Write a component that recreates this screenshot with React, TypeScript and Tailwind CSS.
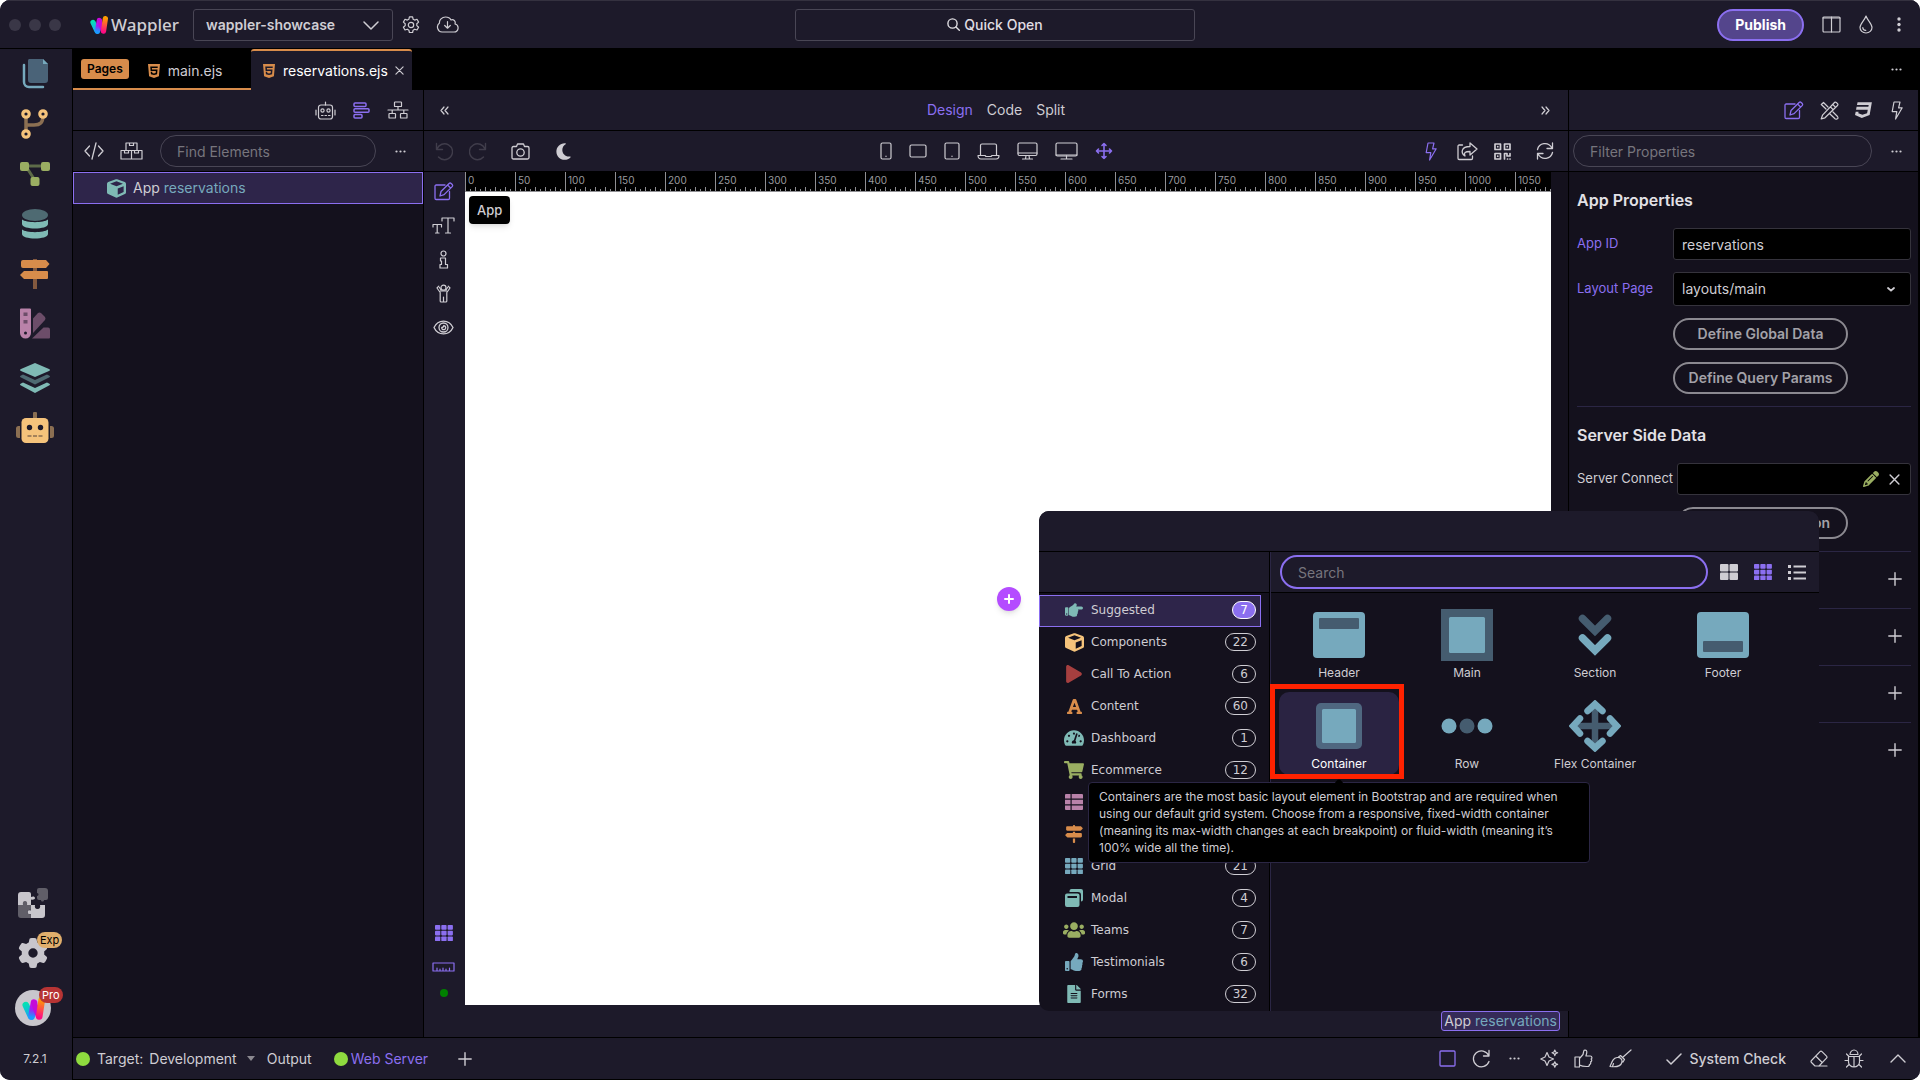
import React from 'react';
import { FaFileAlt, FaFont, FaHandPointRight, FaHtml5, FaPlay, FaShoppingCart, FaTachometerAlt, FaThumbsUp, FaUsers } from 'react-icons/fa';
import { FaCss3, FaMoon, FaSignsPost, FaGear, FaPencil } from 'react-icons/fa6';

type SvgProps = { w: number; h: number; vb?: string; sw?: number; className?: string; children: React.ReactNode };

function Line({ w, h, vb, sw = 1.3, className = '', children }: SvgProps) {
  return (
    <svg width={w} height={h} viewBox={vb ?? `0 0 ${w} ${h}`} fill="none" stroke="currentColor" strokeWidth={sw}
      strokeLinecap="round" strokeLinejoin="round" className={`block shrink-0 ${className}`} aria-hidden="true">
      {children}
    </svg>
  );
}

function Solid({ w, h, vb, className = '', children }: SvgProps) {
  return (
    <svg width={w} height={h} viewBox={vb ?? `0 0 ${w} ${h}`} fill="currentColor" className={`block shrink-0 ${className}`} aria-hidden="true">
      {children}
    </svg>
  );
}

function IconButton({ label, className = '', children }: { label: string; className?: string; children: React.ReactNode }) {
  return (
    <button type="button" aria-label={label} className={`flex shrink-0 items-center justify-center ${className}`}>
      {children}
    </button>
  );
}

function LogoMark({ size, id }: { size: number; id: string }) {
  return (
    <svg width={size} height={size} viewBox="0 0 24 24" fill="none" strokeLinecap="round" className="block shrink-0" aria-hidden="true">
      <defs>
        <linearGradient id={`${id}-a`} gradientUnits="userSpaceOnUse" x1="4" y1="7" x2="10" y2="22">
          <stop offset="0" stopColor="#06e0b4" /><stop offset="1" stopColor="#1a9bff" />
        </linearGradient>
        <linearGradient id={`${id}-b`} gradientUnits="userSpaceOnUse" x1="13" y1="5" x2="10" y2="21">
          <stop offset="0" stopColor="#d808e8" /><stop offset="0.5" stopColor="#a51cf2" /><stop offset="1" stopColor="#1a9bff" />
        </linearGradient>
        <linearGradient id={`${id}-c`} gradientUnits="userSpaceOnUse" x1="21" y1="3" x2="17" y2="21">
          <stop offset="0" stopColor="#ff9d00" /><stop offset="1" stopColor="#ff0a84" />
        </linearGradient>
      </defs>
      <path d="M4 8.5 9.3 20" stroke={`url(#${id}-a)`} strokeWidth="7" />
      <path d="M12.5 6 10 20.4" stroke={`url(#${id}-b)`} strokeWidth="7" />
      <path d="M12.5 6 17 19" stroke="#c40bd8" strokeWidth="6" />
      <path d="M20.5 3.6 18 20.2" stroke={`url(#${id}-c)`} strokeWidth="7" />
    </svg>
  );
}

const Dots = () => (
  <Solid w={11} h={3}><circle cx="1.5" cy="1.5" r="1.1" /><circle cx="5.5" cy="1.5" r="1.1" /><circle cx="9.5" cy="1.5" r="1.1" /></Solid>
);
const Plus = () => <Line w={14} h={14} sw={1.4}><path d="M7 .8v12.4M.8 7h12.4" /></Line>;
const Cross = ({ s = 10 }: { s?: number }) => <Line w={s} h={s} vb="0 0 10 10"><path d="m1 1 8 8M9 1 1 9" /></Line>;
const Bolt = () => <Line w={12} h={19} sw={1.2}><path d="M3 1h6L7.6 6.8h3.6L4.6 18l1.2-7.4H1.2z" /></Line>;
const Edit = () => (
  <Line w={20} h={19} sw={1.3}>
    <path d="M11 3H2.2C1.500 3 1 3.500 1 4.200v12.100c0 .7.5 1.200 1.200 1.200h12.100c.7 0 1.200-.5 1.200-1.200V9.500" />
    <path d="m7 9.500 8.100-8c.6-.6 1.500-.6 2.100 0l1 1c.6.6.6 1.500 0 2.100l-8.100 8L6 14zM13.600 3l3.100 3.100" />
  </Line>
);
const Grid9 = () => (
  <Solid w={18} h={16}>
    {[0, 6.3, 12.6].map((x) => [0, 5.7, 11.4].map((y) => <rect key={`${x}-${y}`} x={x} y={y} width="5.300" height="4.700" rx="0.8" />))}
  </Solid>
);
const Cube = ({ className = '' }: { className?: string }) => (
  <svg width="19" height="19" viewBox="0 0 20 20" fill="currentColor" className={`block shrink-0 ${className}`} aria-hidden="true">
    <path fillRule="evenodd" d="M9.300.3a2 2 0 0 1 1.400 0l8 2.900A2 2 0 0 1 20 5.100v9a2 2 0 0 1-1.200 1.800l-8 3.600a2 2 0 0 1-1.600 0l-8-3.600A2 2 0 0 1 0 14.100v-9a2 2 0 0 1 1.300-1.900zM10 2.400 3.200 5 10 7.600 16.800 5zM11.300 10v6.500l6.200-2.800V7.600z" />
  </svg>
);

/* ---------- left rail ---------- */

const railTop: { label: string; icon: React.ReactNode; className?: string }[] = [
  { label: 'Pages', icon: (
    <Solid w={30} h={32}><path d="M4 7v17a5 5 0 0 0 5 5h14" fill="none" stroke="#76a9bd" strokeWidth="2.500" strokeLinecap="round" />
      <path d="M9 1h14l5 5v16a3 3 0 0 1-3 3H11a3 3 0 0 1-3-3V3a2 2 0 0 1 1-2" fill="#4a6378" /><path d="M23 1v5h5z" fill="#76a9bd" /></Solid>) },
  { label: 'Source control', icon: (
    <Solid w={30} h={32}><path d="M6 6v20M6 17h8c6 0 9-2 9-10" fill="none" stroke="#8b6f52" strokeWidth="3.500" />
      <g fill="#1d1a2a" stroke="#f5c37b" strokeWidth="3.200"><circle cx="6" cy="6" r="3.200" /><circle cx="23" cy="6" r="3.200" /><circle cx="6" cy="26" r="3.200" /></g></Solid>) },
  { label: 'Workflows', icon: (
    <Solid w={32} h={26}><path d="M6 5h20M8 7l9 14" fill="none" stroke="#5d6b48" strokeWidth="3" />
      <g fill="#9aae62"><rect x="1" y="1" width="9" height="9" rx="2" /><rect x="22" y="1" width="9" height="9" rx="2" /><rect x="11.500" y="16" width="9" height="9" rx="2" /></g></Solid>) },
  { label: 'Database', icon: (
    <Solid w={28} h={32}><ellipse cx="14" cy="7" rx="13" ry="6" fill="#4e6a72" />
      <path d="M1 11.500C5 15 23 15 27 11.500V16c0 6-26 6-26 0z" fill="#7fbab5" />
      <path d="M1 21.500C5 25 23 25 27 21.500V26c0 6-26 6-26 0z" fill="#7fbab5" /></Solid>) },
  { label: 'Routes', icon: (
    <Solid w={32} h={32}><path d="M14 1h4v30h-4z" fill="#83593f" /><path d="M4 2h23l3.500 4L27 10H4a2 2 0 0 1-2-2V4a2 2 0 0 1 2-2M28 13H5l-4 4 4 4h23a1 1 0 0 0 1-1v-6a1 1 0 0 0-1-1" fill="#d88c4b" /></Solid>) },
  { label: 'Styles', icon: (
    <Solid w={32} h={32}><path d="M14 10.500 19 5q1.500-1 3 0l4 4q1 1.500 0 3L14 25z" fill="#6c4d69" /><path d="m13 30.500 11.500-11H29a2 2 0 0 1 2 2v8a1 1 0 0 1-1 1z" fill="#6c4d69" />
      <path d="M2 .5h9a1 1 0 0 1 1 1V25a5.500 5.500 0 0 1-11 0V1.500a1 1 0 0 1 1-1" fill="#b982a9" /><path d="M4.500 4.500h4v3.500h-4zM4.500 12h4v3.500h-4z" fill="#6c4d69" /><circle cx="6.500" cy="25" r="1.500" fill="#1d1a2a" /></Solid>) },
  { label: 'Layers', className: 'mt-1', icon: (
    <Solid w={32} h={32}><path d="m16 1 14 6q2 1 0 2l-14 6L2 9Q0 8 2 7z" fill="#7fbab5" /><path d="m4 12.500 12 5.500 12-5.500 2 1q2 1 0 2l-14 7-14-7q-2-1 0-2z" fill="#4e6a72" />
      <path d="m4 20.500 12 5.500 12-5.500 2 1q2 1 0 2L16 31 2 23.500q-2-1 0-2z" fill="#7fbab5" /></Solid>) },
  { label: 'AI assistant', icon: (
    <Solid w={38} h={32}><path d="M17 1.500a2 2 0 0 1 4 0V7h-4zM4 14v12H2.500A2.500 2.500 0 0 1 0 23.500v-7A2.500 2.500 0 0 1 2.500 14zM34 14v12h1.500a2.500 2.500 0 0 0 2.500-2.500v-7a2.500 2.500 0 0 0-2.500-2.500z" fill="#8b6f52" />
      <rect x="5.500" y="6" width="27" height="25" rx="4.500" fill="#f5c37b" /><circle cx="13.500" cy="15.500" r="2.700" fill="#1d1a2a" /><circle cx="24.500" cy="15.500" r="2.700" fill="#1d1a2a" />
      <path d="M11.500 24h4M17 24h4M22.500 24h4" stroke="#8b6f52" strokeWidth="1.500" /></Solid>) },
];

function Rail() {
  return (
    <nav aria-label="Managers" className="flex w-[73px] shrink-0 flex-col border-r border-black bg-[#1d1a2a] pr-[2px]">
      {railTop.map((r) => (
        <IconButton key={r.label} label={r.label} className={`h-[50px] w-full ${r.className ?? ''}`}>{r.icon}</IconButton>
      ))}
      <div className="flex-1" />
      <IconButton label="Extensions" className="h-[50px] w-full pr-1">
        <Solid w={30} h={30}>
          <path d="M3 4h8a2 2 0 0 1 2 2v3c2-1 4-.5 4 1s-2 2-4 1.500V17H0V7a3 3 0 0 1 3-3M13 17h4c-.5 2 0 4 2.500 4s3-2 2.500-4h5v10a3 3 0 0 1-3 3H13v-4c-2 .5-3.500 0-3.500-2s1.500-2 3.500-1.500z" fill="#c8c6cc" />
          <path d="M0 17h5c-.5-2 0-4 2-4s2.500 2 2 4h4v5c-2-.5-3.500 0-3.500 2s1.500 2.500 3.500 2v4H3a3 3 0 0 1-3-3zM21 0h6a3 3 0 0 1 3 3v7a2 2 0 0 1-2 2h-2c0 2-3 2-3 0h-2a2 2 0 0 1-2-2V8c2 0 2-3 0-3V2a2 2 0 0 1 2-2" fill="#605e68" />
        </Solid>
      </IconButton>
      <div className="relative flex h-[50px] items-center justify-center pr-1">
        <IconButton label="Settings" className="text-[#c8c6cc]"><FaGear size={30} /></IconButton>
        <span className="absolute top-1 left-[37px] rounded-full bg-[#e0ae6c] px-[3px] text-[11px] leading-4 text-black">Exp</span>
      </div>
      <div className="relative flex h-[60px] items-center justify-center pr-1">
        <IconButton label="Account" className="size-9 rounded-full bg-[#c8c6cc]"><LogoMark size={23} id="avatar" /></IconButton>
        <span className="absolute top-[9px] left-[39px] rounded-full bg-[#b73434] px-[3px] text-[11px] leading-4 text-white">Pro</span>
      </div>
      <div className="flex h-[42px] items-center justify-center text-xs">7.2.1</div>
    </nav>
  );
}

/* ---------- header ---------- */

function TitleBar() {
  return (
    <header className="grid h-[49px] shrink-0 grid-cols-[70px_1fr_400px_1fr] items-center border-t border-b border-t-[#34313f] border-b-black bg-[#1d1a2a]">
      <div className="col-span-2 flex items-center">
        <div className="ml-[9px] flex gap-2">
          {[0, 1, 2].map((i) => <span key={i} className="size-3 rounded-full bg-[#3a3747]" />)}
        </div>
        <div className="ml-[29px] flex items-center gap-[3px]">
          <LogoMark size={18} id="brand" />
          <span className="w-[68px] font-['Noto_Sans'] text-[17px] leading-6 font-medium">Wappler</span>
        </div>
        <div className="relative ml-[14px] w-[200px]">
          <select aria-label="Project" defaultValue="wappler-showcase" className="h-8 w-full appearance-none rounded-[3px] border border-[#494655] bg-transparent pl-3 text-sm font-semibold text-[#cfcdd3]">
            <option>wappler-showcase</option>
          </select>
          <Line w={16} h={9} sw={1.500} className="pointer-events-none absolute top-3 right-[14px]"><path d="m1 1 7 7 7-7" /></Line>
        </div>
        <IconButton label="Project settings" className="ml-[9px]">
          <Line w={18} h={18} vb="0 0 18 18" sw={1.200}>
            <circle cx="9" cy="9" r="2.700" />
            <path d="M7.400.8h3.200l.5 2.400 1.600.9 2.300-.8 1.600 2.800-1.800 1.600v1.900l1.800 1.700-1.600 2.700-2.300-.8-1.600 1-.5 2.300H7.400L6.900 14.200l-1.600-1-2.300.8-1.600-2.700 1.800-1.700V7.700L1.400 6.100 3 3.300l2.300.8 1.600-.9z" />
          </Line>
        </IconButton>
        <IconButton label="Download updates" className="ml-4">
          <Line w={23} h={17} sw={1.200}><path d="M6 16a5 5 0 0 1-2.500-9C3 4 6 1 9.500 1c2.500 0 4.500 1 5.500 3 2.500-1 5 1 4 4 4.500 1 4 8-1 8zM11.500 5.500v6.500M8.700 9.500l2.800 2.700 2.800-2.700" /></Line>
        </IconButton>
      </div>
      <button type="button" className="flex h-8 items-center justify-center gap-1 rounded-[3px] border border-[#494655] text-sm font-medium text-[#e0dee3]">
        <Line w={13} h={13} sw={1.400}><circle cx="5.500" cy="5.500" r="4.600" /><path d="m9 9 3.300 3.300" /></Line>
        Quick Open
      </button>
      <div className="flex items-center justify-end pr-[19px]">
        <button type="button" className="h-8 rounded-full border-2 border-[#8b6ff0] bg-[#54458c] px-4 text-sm font-bold text-white">Publish</button>
        <IconButton label="Toggle layout" className="ml-[18px]"><Line w={19} h={17} sw={1.200}><rect x="1" y="1" width="17" height="15" rx="1" /><path d="M1 2h17M9.500 1v15" /></Line></IconButton>
        <IconButton label="Theme" className="ml-[18px]"><Line w={14} h={19} sw={1.200}><path d="M7 1C5.500 5.500 1 8.500 1 12.500a6 5.500 0 0 0 12 0C13 8.500 8.500 5.500 7 1M3.800 12.500c0 1.800 1.300 2.800 3 2.800" /></Line></IconButton>
        <IconButton label="More" className="ml-6"><Solid w={4} h={15}><circle cx="2" cy="2" r="1.700" /><circle cx="2" cy="7.500" r="1.700" /><circle cx="2" cy="13" r="1.700" /></Solid></IconButton>
      </div>
    </header>
  );
}

function TabBar() {
  return (
    <div className="flex h-[41px] shrink-0 bg-black text-sm">
      <div className="flex w-[178px] items-center border-b-2 border-[#d88c4b] pl-2">
        <span className="rounded-[3px] bg-[#d88c4b] px-[6px] text-xs leading-5 font-semibold text-black">Pages</span>
        <button type="button" className="ml-[19px] flex items-center gap-2 pt-1"><FaHtml5 size={16} className="-mx-[2px] text-[#d88c4b]" />main.ejs</button>
      </div>
      <div className="flex w-[161px] items-center rounded-t-[3px] border-t-2 border-[#d88c4b] bg-[#1d1a2a] pl-3 text-white">
        <button type="button" className="flex items-center gap-2"><FaHtml5 size={16} className="-mx-[2px] text-[#d88c4b]" />reservations.ejs</button>
        <IconButton label="Close tab" className="ml-[7px] text-[#cfcdd3]"><Cross s={9} /></IconButton>
      </div>
      <div className="flex-1" />
      <IconButton label="Tab options" className="mr-[18px]"><Dots /></IconButton>
    </div>
  );
}

/* ---------- structure panel ---------- */

function StructurePanel() {
  return (
    <section aria-label="App structure" className="flex w-[351px] shrink-0 flex-col border-r border-black bg-[#14111d]">
      <div className="flex h-[41px] items-center justify-end gap-[17px] border-b border-black bg-[#1d1a2a] pr-[14px]">
        <IconButton label="AI">
          <Line w={21} h={19} sw={1.200}><rect x="3.500" y="4" width="14" height="14" rx="2.500" /><path d="M10.500 1v3M1 9v5M20 9v5M6.500 14.500h1.500M10 14.500h1.500M13.500 14.500H15" /><circle cx="7.500" cy="9.500" r="1.600" /><circle cx="13.500" cy="9.500" r="1.600" /></Line>
        </IconButton>
        <IconButton label="Structure" className="text-[#8b6ff0]">
          <Line w={17} h={17} sw={1.500}><rect x="1" y="1" width="12" height="3.500" rx="1" /><rect x="1" y="6.700" width="15" height="3.500" rx="1" /><rect x="1" y="12.400" width="8" height="3.500" rx="1" /></Line>
        </IconButton>
        <IconButton label="Tree">
          <Line w={22} h={18} sw={1.200}><rect x="7.500" y="1" width="7" height="4.500" rx=".6" /><rect x="2" y="12.500" width="6.500" height="4.500" rx=".6" /><rect x="13.500" y="12.500" width="6.500" height="4.500" rx=".6" /><path d="M1 9h20M11 5.500V9M5.200 9v3.500M16.800 9v3.500" /></Line>
        </IconButton>
      </div>
      <div className="flex h-[41px] items-center border-b border-black bg-[#1d1a2a] pl-[11px]">
        <IconButton label="Code"><Line w={20} h={18} sw={1.300}><path d="M5.500 4 1 9l4.500 5M14.500 4 19 9l-4.500 5M12 1 8 17" /></Line></IconButton>
        <IconButton label="Blocks" className="ml-4">
          <Line w={23} h={18} sw={1.200}><path d="M6 1h11v7.500H6zM1 8.500h21V17H1zM11.500 8.500V17M9.500 1v2.500h4V1M4.500 8.500V11h4V8.500M14.500 8.500V11h4V8.500" /></Line>
        </IconButton>
        <input aria-label="Find Elements" placeholder="Find Elements" className="ml-[17px] h-8 w-[216px] rounded-full border border-[#494655] bg-transparent px-4 text-sm placeholder:text-[#77757d]" />
        <IconButton label="Options" className="ml-[19px]"><Dots /></IconButton>
      </div>
      <button type="button" className="flex h-8 items-center border border-[#8b6ff0] bg-[#2e254a] pl-[33px] text-left text-sm">
        <Cube className="mr-[7px] text-[#7fbab5]" />
        <span>App <span className="text-[#76a9bd]">reservations</span></span>
      </button>
    </section>
  );
}

/* ---------- canvas ---------- */

const rulerMarks = Array.from({ length: 22 }, (_, i) => i * 50);

function Ruler() {
  return (
    <div className="flex h-5 shrink-0 overflow-hidden border-b border-[#8f8f93] bg-black">
      {rulerMarks.map((m) => (
        <div key={m} className="flex w-[50px] shrink-0 flex-col justify-between border-l border-[#8f8f93] pl-[2px]">
          <span className="text-[10px] leading-4 text-[#9a9a9e]">{m}</span>
          <svg width="46" height="5" viewBox="0 0 46 5" className="-mt-1 block shrink-0" aria-hidden="true" stroke="#8f8f93" strokeWidth="1">
            {[5, 10, 15, 20, 25, 30, 35, 40, 45].map((t) => <path key={t} d={`M${t - 2.500} ${t % 10 ? 3 : 1}V5`} />)}
          </svg>
        </div>
      ))}
    </div>
  );
}

function DesignToolbar() {
  return (
    <div className="grid h-[41px] shrink-0 grid-cols-[1fr_auto_1fr] items-center border-b border-black bg-[#1d1a2a]">
      <div className="flex items-center pl-[11px]">
        <IconButton label="Undo" className="text-[#403d4b]"><Line w={18} h={19} sw={1.400}><path d="M1.500 1.500v6h6M2 7a8 8 0 1 1 1.500 8" /></Line></IconButton>
        <IconButton label="Redo" className="ml-4 text-[#403d4b]"><Line w={18} h={19} sw={1.400}><path d="M16.500 1.500v6h-6M16 7a8 8 0 1 0-1.500 8" /></Line></IconButton>
        <IconButton label="Screenshot" className="ml-6"><Line w={19} h={17} sw={1.300}><path d="M2.500 3.500h3l1-2.500h6l1 2.500h3c1 0 1.500.5 1.500 1.500v9.500c0 1-.5 1.500-1.500 1.500h-14C1.500 16 1 15.500 1 14.500V5c0-1 .5-1.500 1.500-1.500" /><circle cx="9.500" cy="9.500" r="3.700" /></Line></IconButton>
        <IconButton label="Dark mode" className="ml-6"><FaMoon size={19} /></IconButton>
      </div>
      <div className="flex items-center gap-[17px]">
        <IconButton label="Phone"><Line w={12} h={18} sw={1.200}><rect x="1" y="1" width="10" height="16" rx="1.500" /><path d="M6 14.200v.2" /></Line></IconButton>
        <IconButton label="Phone landscape"><Line w={18} h={14} sw={1.200}><rect x="1" y="1" width="16" height="12" rx="1.500" /></Line></IconButton>
        <IconButton label="Tablet"><Line w={16} h={18} sw={1.200}><rect x="1" y="1" width="14" height="16" rx="1.500" /><path d="M8 14.200v.2" /></Line></IconButton>
        <IconButton label="Laptop"><Line w={23} h={17} sw={1.200}><path d="M3.500 12V2.500c0-1 .5-1.500 1.500-1.500h13c1 0 1.500.5 1.500 1.500V12M1 12.500h7l1 1h5l1-1h7c0 2-1 3.500-3 3.500H4c-2 0-3-1.500-3-3.500" /></Line></IconButton>
        <IconButton label="Desktop"><Line w={21} h={18} sw={1.200}><rect x="1" y="1" width="19" height="12.500" rx="1.500" /><path d="M1 11h19M9 13.500 8.500 17M12 13.500l.5 3.500M5.500 17h10" /></Line></IconButton>
        <IconButton label="Wide desktop"><Line w={23} h={18} sw={1.200}><rect x="1" y="1" width="21" height="13" rx="1.500" /><path d="M1 13h21M11.500 14v3M6 17h11" /></Line></IconButton>
        <IconButton label="Free size" className="text-[#8b6ff0]"><Line w={18} h={18} sw={1.600}><path d="M9 1.500v15M1.500 9h15M7 3.500l2-2 2 2M7 14.500l2 2 2-2M3.500 7l-2 2 2 2M14.500 7l2 2-2 2" /></Line></IconButton>
      </div>
      <div className="flex items-center justify-end pr-[14px]">
        <IconButton label="Live data" className="text-[#8b6ff0]"><Bolt /></IconButton>
        <IconButton label="Open in browser" className="ml-5"><Line w={21} h={19} sw={1.300}><path d="M5.500 3H2.200C1.500 3 1 3.500 1 4.200v12c0 .8.500 1.300 1.200 1.300h12.100c.7 0 1.200-.5 1.200-1.200V14M13 1l7 6-7 6V9.500c-5 0-6.500 1-5 4.500C3.500 11 4 4.500 13 4.500z" /></Line></IconButton>
        <IconButton label="QR code" className="ml-4">
          <Line w={17} h={17} sw={1.700}><path d="M1 1h5.500v5.500H1zM10.500 1H16v5.500h-5.500zM1 10.500h5.500V16H1zM3.700 3.700h.1M13.200 3.700h.1M3.700 13.200h.1M10.500 16v-5.500H13v2.500h3v-2.500M13.500 16h.1M16 16h.1" /></Line>
        </IconButton>
        <IconButton label="Refresh" className="ml-[25px]"><Line w={18} h={18} sw={1.300}><path d="M1.500 7.500C3 1 12-1 16 6M16.500 1v5.500H11M16.500 10.500C15 17 6 19 2 12M1.500 17v-5.500H7" /></Line></IconButton>
      </div>
    </div>
  );
}

function CanvasTools() {
  return (
    <div className="flex w-[41px] shrink-0 flex-col items-center bg-[#1d1a2a] pt-[2px] pr-[2px]">
      <IconButton label="Edit" className="h-[34px] text-[#8b6ff0]"><Edit /></IconButton>
      <IconButton label="Text" className="h-[34px]"><Line w={23} h={17} sw={1.200}><path d="M10 4V1h12v3M16 1v15M13.500 16h5M1 10V7.500h8.500V10M5.200 7.500V16M3.500 16H7" /></Line></IconButton>
      <IconButton label="Info" className="h-[34px]"><Line w={10} h={19} sw={1.200}><circle cx="4.500" cy="3.500" r="2.500" /><path d="M1.500 8H6.500v6.500h2V18h-7.500v-3.500h1.500V11h-1z" /></Line></IconButton>
      <IconButton label="Accessibility" className="h-[34px]"><Line w={15} h={19} sw={1.200}><circle cx="7.500" cy="3.700" r="2.500" /><path d="M2.800 2.200 1 4l3.200 4.500V17q0 1 1 1h4.600q1 0 1-1V8.500L14 4l-1.800-1.800M7.500 13v5M4.500 7h6M3.500 3.500 5 6M11.500 3.500 10 6" /></Line></IconButton>
      <IconButton label="Preview" className="h-[34px]"><Line w={21} h={15} sw={1.300}><path d="M1 7.500C5-1 16-1 20 7.500 16 16 5 16 1 7.500" /><circle cx="10.500" cy="7.500" r="4.500" /><path d="M8.700 7.500q2 0 2-1.800a2 2 0 1 1-2 1.800" /></Line></IconButton>
      <div className="flex-1" />
      <IconButton label="Grid" className="h-[34px] text-[#8b6ff0]"><Grid9 /></IconButton>
      <IconButton label="Ruler" className="h-[34px] text-[#8b6ff0]"><Line w={23} h={10} sw={1.200}><path d="M1 1h21v8H1zM5 9V6M8 9V7M11 9V6M14 9V7M17.500 9V6" /></Line></IconButton>
      <span className="mt-[5px] mb-10 size-2 rounded-full bg-[#008000]" />
    </div>
  );
}

function DesignView() {
  return (
    <main className="flex min-w-0 flex-1 flex-col border-r border-black">
      <div className="grid h-[41px] shrink-0 grid-cols-[1fr_auto_1fr] items-center border-b border-black bg-[#1d1a2a] text-sm">
        <IconButton label="Collapse left" className="ml-4 justify-self-start"><Line w={9} h={9} sw={1.200}><path d="M4 1 1 4.500 4 8M8 1 5 4.500 8 8" /></Line></IconButton>
        <div className="flex gap-[14px]">
          <button type="button" className="text-[#8b6ff0]">Design</button>
          <button type="button">Code</button>
          <button type="button">Split</button>
        </div>
        <IconButton label="Collapse right" className="mr-[18px] justify-self-end"><Line w={9} h={9} sw={1.200}><path d="M1 1l3 3.500L1 8M5 1l3 3.500L5 8" /></Line></IconButton>
      </div>
      <DesignToolbar />
      <div className="flex min-h-0 flex-1">
        <CanvasTools />
        <div className="flex min-w-0 flex-1 flex-col">
          <div className="flex min-h-0 flex-1 bg-[#14111d] pr-[17px]">
            <div className="flex min-w-0 flex-1 flex-col bg-white">
              <Ruler />
              <div className="p-1"><span className="inline-block rounded-[4px] bg-black px-2 text-[13px] leading-7 font-medium shadow-md">App</span></div>
            </div>
          </div>
          <div className="flex h-8 shrink-0 items-center justify-end bg-[#1d1a2a] pr-2">
            <button type="button" className="rounded-[3px] border border-[#8b6ff0] bg-[#352b58] px-[2px] text-sm leading-[18px]">App <span className="text-[#76a9bd]">reservations</span></button>
          </div>
        </div>
      </div>
    </main>
  );
}

/* ---------- properties ---------- */

const pill = 'h-8 rounded-full border-2 border-[#8b8990] text-sm font-semibold text-[#a3a1a8]';

function Properties() {
  return (
    <aside aria-label="Properties" className="flex w-[351px] shrink-0 flex-col border-r-2 border-black bg-[#14111d]">
      <div className="flex h-[41px] shrink-0 items-center justify-end border-b border-black bg-[#1d1a2a] pr-[15px]">
        <IconButton label="Properties" className="text-[#8b6ff0]"><Edit /></IconButton>
        <IconButton label="Design" className="ml-4">
          <Line w={19} h={19} sw={1.200}><path d="M8 6 3.500 1.500l-2.200 2L6 8M13 11l4.500 4.500q1.200 2-.5 2.500-1.500.5-2.500-.7L10 13M14.500 1.500l-12 12.700-1.300 3.700L5 16.800 17.500 4.500q.8-1 0-1.800l-1.200-1.200q-.9-.8-1.800 0M12.800 3.500l2.800 2.800M10.500 6l2.800 2.800" /></Line>
        </IconButton>
        <IconButton label="CSS" className="ml-4"><FaCss3 size={18} /></IconButton>
        <IconButton label="Events" className="ml-[18px]"><Bolt /></IconButton>
      </div>
      <div className="flex h-[41px] shrink-0 items-center border-b border-black bg-[#1d1a2a] pl-1">
        <input aria-label="Filter Properties" placeholder="Filter Properties" className="h-8 w-[299px] rounded-full border border-[#494655] bg-transparent px-4 text-sm placeholder:text-[#77757d]" />
        <IconButton label="Options" className="ml-[19px]"><Dots /></IconButton>
      </div>
      <div className="flex flex-col pr-[7px] pl-2">
        <h2 className="mt-4 text-base leading-6 font-semibold text-[#e3e1e6]">App Properties</h2>
        <div className="mt-4 flex items-center">
          <label htmlFor="app-id" className="w-24 text-[13px] text-[#8b6ff0]">App ID</label>
          <input id="app-id" defaultValue="reservations" className="h-8 min-w-0 flex-1 rounded-[3px] border border-[#35333c] bg-black px-2 text-sm" />
        </div>
        <div className="relative mt-3 flex items-center">
          <label htmlFor="layout-page" className="w-24 text-[13px] text-[#8b6ff0]">Layout Page</label>
          <select id="layout-page" defaultValue="layouts/main" className="h-[34px] min-w-0 flex-1 appearance-none rounded-[3px] border border-[#35333c] bg-black px-2 text-sm"><option>layouts/main</option></select>
          <Line w={8} h={5} sw={1.800} className="pointer-events-none absolute right-4"><path d="m1 1 3 2.700L7 1" /></Line>
        </div>
        <button type="button" className={`mt-3 ml-24 w-[175px] ${pill}`}>Define Global Data</button>
        <button type="button" className={`mt-3 ml-24 w-[175px] ${pill}`}>Define Query Params</button>
        <hr className="mt-3 border-[#2b2644]" />
        <h2 className="mt-4 text-base leading-6 font-semibold text-[#e3e1e6]">Server Side Data</h2>
        <div className="relative mt-4 flex items-center">
          <label htmlFor="server-connect" className="w-[100px] text-[13px] whitespace-nowrap">Server Connect</label>
          <input id="server-connect" className="h-8 min-w-0 flex-1 rounded-[3px] border border-[#35333c] bg-black px-2 text-sm" />
          <IconButton label="Edit connection" className="absolute right-8 text-[#9aae62]"><FaPencil size={16} /></IconButton>
          <IconButton label="Clear connection" className="absolute right-[11px]"><Cross s={11} /></IconButton>
        </div>
        <button type="button" className={`mt-3 ml-[100px] w-[171px] pr-4 text-right ${pill}`}>Define Session</button>
        <div className="mt-3">
          {['Data', 'Includes', 'Styles', 'Scripts'].map((s) => (
            <div key={s} className="flex h-[57px] items-center justify-end border-t border-[#2b2644] pr-[9px] pb-[2px]">
              <IconButton label={`Add to ${s}`}><Plus /></IconButton>
            </div>
          ))}
        </div>
      </div>
    </aside>
  );
}

/* ---------- component picker ---------- */

const TableList = () => (
  <Solid w={18} h={16}><path d="M1 0h4.500v4.600H0V1a1 1 0 0 1 1-1M6.700 0H17a1 1 0 0 1 1 1v3.600H6.700zM0 5.700h5.500v4.600H0zM6.700 5.700H18v4.600H6.700zM0 11.400h5.500V16H1a1 1 0 0 1-1-1zM6.700 11.400H18V15a1 1 0 0 1-1 1H6.700z" /></Solid>
);
const ModalIcon = () => (
  <Solid w={18} h={18}><path d="M6.500 0H16a2 2 0 0 1 2 2v8.500a2 2 0 0 1-2 2V6a3 3 0 0 0-3-3H4.500V2a2 2 0 0 1 2-2" /><path fillRule="evenodd" d="M2 4.500h10.500a2 2 0 0 1 2 2V16a2 2 0 0 1-2 2H2a2 2 0 0 1-2-2V6.500a2 2 0 0 1 2-2M2.500 7v2H12V7z" /></Solid>
);

type Category = { id: string; name?: string; count?: number; icon: React.ReactNode; color: string };

const categories: Category[] = [
  { id: 'suggested', name: 'Suggested', count: 7, icon: <FaHandPointRight size={18} />, color: 'text-[#7fbab5]' },
  { id: 'components', name: 'Components', count: 22, icon: <Cube />, color: 'text-[#f5c37b]' },
  { id: 'cta', name: 'Call To Action', count: 6, icon: <FaPlay size={18} />, color: 'text-[#a63f3f]' },
  { id: 'content', name: 'Content', count: 60, icon: <FaFont size={17} />, color: 'text-[#d88c4b]' },
  { id: 'dashboard', name: 'Dashboard', count: 1, icon: <FaTachometerAlt size={20} />, color: 'text-[#7fbab5]' },
  { id: 'ecommerce', name: 'Ecommerce', count: 12, icon: <FaShoppingCart size={20} />, color: 'text-[#9aae62]' },
  { id: 'features', icon: <TableList />, color: 'text-[#b982a9]' },
  { id: 'navigation', icon: <FaSignsPost size={18} />, color: 'text-[#d88c4b]' },
  { id: 'grid', name: 'Grid', count: 21, icon: <Grid9 />, color: 'text-[#76a9bd]' },
  { id: 'modal', name: 'Modal', count: 4, icon: <ModalIcon />, color: 'text-[#7fbab5]' },
  { id: 'teams', name: 'Teams', count: 7, icon: <FaUsers size={22} />, color: 'text-[#9aae62]' },
  { id: 'testimonials', name: 'Testimonials', count: 6, icon: <FaThumbsUp size={18} />, color: 'text-[#76a9bd]' },
  { id: 'forms', name: 'Forms', count: 32, icon: <FaFileAlt size={18} />, color: 'text-[#7fbab5]' },
];

const A = '#76a9bd';
const B = '#455c6f';
const tiles: { name: string; icon: React.ReactNode }[] = [
  { name: 'Header', icon: <><rect y="3" width="52" height="46" rx="4" fill={A} /><rect x="6" y="9" width="40" height="11" rx="1" fill={B} /></> },
  { name: 'Main', icon: <><rect width="52" height="52" fill={B} /><rect x="8" y="8" width="36" height="36" rx="1.500" fill={A} /></> },
  { name: 'Section', icon: <g fill="none" strokeWidth="7.500" strokeLinecap="round" strokeLinejoin="miter"><path d="m13.500 9.500 12.500 12.500 12.500-12.500" stroke={B} /><path d="m13.500 29 12.500 12.500 12.500-12.500" stroke={A} /></g> },
  { name: 'Footer', icon: <><rect y="3" width="52" height="46" rx="4" fill={A} /><rect x="6" y="32" width="40" height="11" rx="1" fill={B} /></> },
  { name: 'Container', icon: <><rect x="3" y="3" width="46" height="46" rx="5" fill="#4f6780" /><rect x="9" y="9" width="34" height="34" rx="1.500" fill={A} /></> },
  { name: 'Row', icon: <><circle cx="8" cy="26" r="7.500" fill={A} /><circle cx="26" cy="26" r="7.500" fill={B} /><circle cx="44" cy="26" r="7.500" fill={A} /></> },
  { name: 'Flex Container', icon: <g fill="none" strokeWidth="6.500" strokeLinecap="round"><path d="M26 9v34M9 26h34" stroke={B} /><path d="m18.500 11 7.500-7 7.500 7M18.500 41l7.500 7 7.500-7M11 18.500 4 26l7 7.500M41 18.500l7 7.500-7 7.500" stroke={A} /></g> },
];

function ComponentPicker() {
  return (
    <div role="dialog" aria-label="Add component" className="absolute top-[511px] right-[101px] flex h-[500px] w-[780px] flex-col rounded-t-[10px] rounded-bl-[10px] bg-[#14111d]">
      <div className="h-[41px] shrink-0 rounded-t-[10px] border-b border-black bg-[#1d1a2a]" />
      <div className="flex min-h-0 flex-1">
        <div className="flex w-[231px] shrink-0 flex-col border-r border-black">
          <div className="h-[41px] shrink-0 border-b border-black bg-[#1d1a2a]" />
          <ul className="mt-[2px] min-h-0 flex-1 overflow-hidden rounded-bl-[10px] font-['DejaVu_Sans'] text-xs">
            {categories.map((c, i) => (
              <li key={c.id}>
                <button type="button" aria-label={c.name ?? c.id} className={`flex h-8 w-[222px] items-center border pr-1 pb-[2px] pl-[23px] ${i === 0 ? 'border-[#8b6ff0] bg-[#2e254a]' : 'border-transparent'}`}>
                  <span className={`flex w-[22px] justify-center ${c.color}`}>{c.icon}</span>
                  {c.name && <span className="ml-[6px] flex-1 text-left">{c.name}</span>}
                  {c.count && <span className={`rounded-full border px-[7px] leading-4 ${i === 0 ? 'border-white bg-[#8b6ff0] text-white' : 'border-[#cfcdd3]'}`}>{c.count}</span>}
                </button>
              </li>
            ))}
          </ul>
        </div>
        <div className="flex min-w-0 flex-1 flex-col border-l border-[#2b2644]">
          <div className="flex h-[41px] shrink-0 items-center border-b border-black bg-[#1d1a2a] pr-[13px] pl-[9px]">
            <input aria-label="Search" placeholder="Search" className="h-[34px] min-w-0 flex-1 rounded-full border-2 border-[#8b6ff0] bg-transparent px-4 text-sm outline-none placeholder:text-[#77757d]" />
            <IconButton label="Large icons" className="ml-3"><Solid w={18} h={16}><rect width="8.500" height="7.500" rx="1" /><rect x="9.500" width="8.500" height="7.500" rx="1" /><rect y="8.500" width="8.500" height="7.500" rx="1" /><rect x="9.500" y="8.500" width="8.500" height="7.500" rx="1" /></Solid></IconButton>
            <IconButton label="Small icons" className="ml-4 text-[#8b6ff0]"><Grid9 /></IconButton>
            <IconButton label="List" className="ml-4"><Solid w={18} h={15}><path d="M0 0h3v3H0zM0 6h3v3H0zM0 12h3v3H0zM5.500.5H18v2H5.500zM5.500 6.500H18v2H5.500zM5.500 12.500H18v2H5.500z" /></Solid></IconButton>
          </div>
          <div className="grid grid-cols-[repeat(4,120px)] gap-x-2 gap-y-2 pt-2 pl-2">
            {tiles.map((t) => (
              <div key={t.name} className="relative">
                <button type="button" className={`flex h-[83px] w-full flex-col items-center rounded-[10px] pt-2 ${t.name === 'Container' ? 'bg-[#2a2342] text-white' : ''}`}>
                  <svg width="52" height="52" viewBox="0 0 52 52" className="block" aria-hidden="true">{t.icon}</svg>
                  <span className="mt-1 text-xs leading-4">{t.name}</span>
                </button>
                {t.name === 'Container' && <span className="pointer-events-none absolute -top-2 -right-[5px] -bottom-1 -left-[9px] border-5 border-[#ff2200]" />}
              </div>
            ))}
          </div>
        </div>
      </div>
      <div role="tooltip" className="absolute top-[271px] left-[49px] w-[502px] rounded-[4px] border border-[#2b2644] bg-black pt-[5px] pr-5 pb-[6px] pl-[10px] text-xs leading-[17px]">
        <svg width="16" height="6" viewBox="0 0 16 6" className="absolute -top-[4px] left-[242px]" aria-hidden="true"><path d="M0 6q3 0 5-3.500 3-4 6 0Q13 6 16 6z" fill="#000" /></svg>
        Containers are the most basic layout element in Bootstrap and are required when using our default grid system. Choose from a responsive, fixed-width container (meaning its max-width changes at each breakpoint) or fluid-width (meaning it’s 100% wide all the time).
      </div>
    </div>
  );
}

/* ---------- status bar ---------- */

function StatusBar() {
  return (
    <footer className="flex h-[43px] shrink-0 items-center border-y border-black bg-[#1d1a2a] pl-[3px] text-sm">
      <span className="size-[14px] rounded-full bg-[#8fdb3f]" />
      <button type="button" className="ml-[7px] flex items-center gap-[6px]">
        <span>Target:</span><span>Development</span>
        <Solid w={8} h={5} className="ml-1 text-[#8b8990]"><path d="M0 0h8L4 5z" /></Solid>
      </button>
      <button type="button" className="ml-3">Output</button>
      <button type="button" className="ml-[22px] flex items-center gap-[3px] text-[#8b6ff0]"><span className="size-[14px] rounded-full bg-[#8fdb3f]" />Web Server</button>
      <IconButton label="New terminal" className="ml-[30px]"><Plus /></IconButton>
      <div className="flex-1" />
      <IconButton label="Stop" className="text-[#8b6ff0]"><Line w={17} h={17} sw={1.300}><rect x="1" y="1" width="15" height="15" rx="1" /></Line></IconButton>
      <IconButton label="Restart" className="ml-4"><Line w={19} h={19} sw={1.300}><path d="M17 1.500V7h-5.500M16.700 6.500A8 8 0 1 0 17 12.500" /></Line></IconButton>
      <IconButton label="More" className="ml-[18px]"><Dots /></IconButton>
      <IconButton label="AI" className="ml-5"><Line w={19} h={19} sw={1.200}><path d="m7 3.500 2 4.500 4.500 2L9 12l-2 4.500L5 12 .800 10 5 8zM14.800 1l.8 2 2 .8-2 .8-.8 2-.8-2-2-.8 2-.8zM14.800 12.800l.8 1.800 2 .8-2 .8-.8 2-.8-2-2-.8 2-.8z" /></Line></IconButton>
      <IconButton label="Like" className="ml-[15px]"><Line w={19} h={19} sw={1.200}><path d="M1 8h4.500v10H1zM5.500 9.500 9 5.500l.8-3.700c.3-1 2.700-1 3 .7.2 1.500-.4 3-.9 4.500h4.400c2 0 2 2.500.8 3 1 .8.800 2.400-.5 2.900.5 1 0 2.300-1.200 2.600.200 1.400-.5 2-1.900 2-3 0-5 .2-8-1.500" /></Line></IconButton>
      <IconButton label="Clean" className="ml-4"><Line w={23} h={19} sw={1.200}><path d="M22 1 13.500 8.500M9.500 8l2-1.500 4 4-1.500 2.500M8 8.500C4.500 9 3.500 11.500 1 17.500c6 .8 11-.500 12-4.500.5-3-2-5-5-4.500M4.500 14.500 3.500 17.500" /></Line></IconButton>
      <button type="button" className="ml-[34px] flex items-center gap-2 font-medium"><Line w={16} h={12} sw={1.500}><path d="m1 7 4 4L15 1" /></Line>System Check</button>
      <IconButton label="Erase" className="ml-6"><Line w={18} h={17} sw={1.200}><path d="M17 16H5L1.500 12.500q-1-1 0-2L10 1.700q1-1 2 0l4.500 4.500q1 1 0 2L9 16M5.700 6l6.500 6.500" /></Line></IconButton>
      <IconButton label="Debug" className="ml-4"><Line w={20} h={19} sw={1.200}><path d="M6 5.500a4 4.500 0 0 1 8 0zM4.500 7.500h11V13a5.500 5 0 0 1-11 0zM10 8v10M1 11.500h3.500M15.500 11.500H19M2.500 5l2.500 2.500M17.500 5 15 7.500M2.500 18 5 15.500M17.500 18 15 15.500" /></Line></IconButton>
      <IconButton label="Expand" className="mr-[14px] ml-[26px]"><Line w={16} h={9} sw={1.400}><path d="m1 8 7-7 7 7" /></Line></IconButton>
    </footer>
  );
}

export default function App() {
  return (
    <div className="relative h-screen overflow-hidden bg-white font-['Inter',sans-serif] text-[#cfcdd3]">
      <div className="flex h-full flex-col overflow-hidden rounded-[10px] bg-[#1d1a2a]">
        <TitleBar />
        <div className="flex min-h-0 flex-1">
          <Rail />
          <div className="flex min-w-0 flex-1 flex-col">
            <TabBar />
            <div className="flex min-h-0 flex-1">
              <StructurePanel />
              <DesignView />
              <Properties />
            </div>
            <StatusBar />
          </div>
        </div>
      </div>
      <IconButton label="Insert here" className="absolute top-[587px] right-[899px] size-6 rounded-full bg-[#b44cff] text-white shadow-md">
        <Line w={10} h={10} sw={2}><path d="M5 1v8M1 5h8" /></Line>
      </IconButton>
      <ComponentPicker />
    </div>
  );
}
